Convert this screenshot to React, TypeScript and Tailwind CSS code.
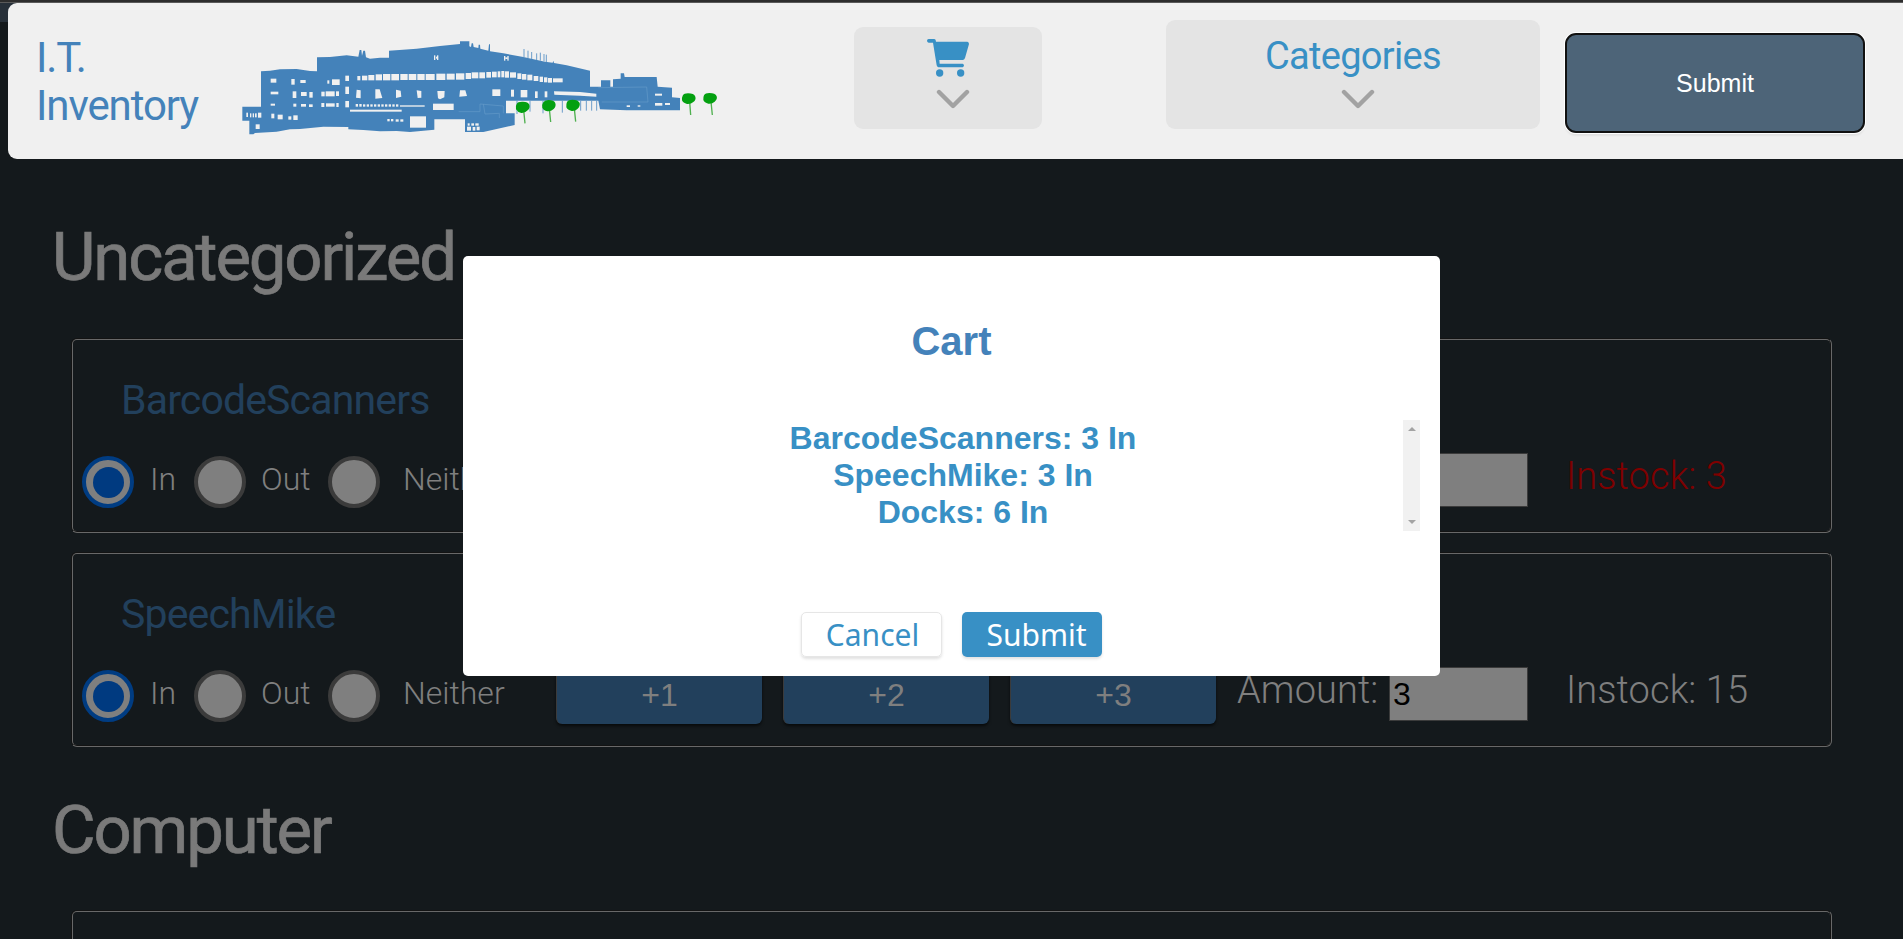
const HOLES: number[][] = [
  [122,146,17,12],[184,147,10,17],[211,150,16,9],[292,151,6,10],[306,148,23,17],[346,137,11,16],
  [122,185,23,8],[188,184,11,20],[213,186,17,12],[238,186,10,17],[274,185,10,14],[287,184,27,15],[318,184,9,14],[346,170,11,22],
  [122,221,13,6],[190,221,9,9],[213,222,15,8],[237,223,11,8],[274,219,9,12],[288,220,26,10],[319,219,7,12],[346,213,11,19],
  [49,248,5,13],[60,250,4,12],[68,250,4,12],[75,250,5,12],[84,248,10,15],[124,251,9,14],[143,254,15,14],[175,259,9,10],[190,256,13,14],[77,283,12,14],
  [382,138,9,13],[396,137,16,14],[415,135,18,16],[437,133,19,18],[459,132,22,19],[484,132,23,19],[511,132,22,18],[536,132,23,18],[562,132,22,18],[587,132,27,18],[619,131,27,19],[650,131,24,18],[678,130,25,19],[707,129,16,18],[725,127,20,18],[748,127,17,18],[769,126,14,17],[786,125,14,17],[803,124,8,18],[814,123,9,19],[825,124,12,19],[840,127,18,16],[862,130,12,17],[876,132,13,17],[892,134,15,17],[911,138,14,15],[929,140,10,16],[942,142,10,15],[954,144,12,14],[969,145,29,12],
  [787,178,24,20],[843,179,9,21],[872,180,20,22],[915,184,8,20],[944,184,8,18],
  [377,222,7,8],[388,222,7,8],[399,223,7,7],[410,223,7,7],[421,223,7,7],[432,223,7,7],[443,223,7,7],[454,223,7,7],[465,223,7,7],[476,223,7,7],[487,223,7,7],[498,223,7,7],[510,226,74,4],
  [360,239,155,6],[609,221,62,19],[472,267,7,7],[483,267,7,7],[497,268,9,7],[511,268,9,7],[540,259,48,34],
  [713,280,6,7],[724,280,8,7],[736,280,10,7],[711,290,12,12],[728,291,8,11],[740,290,9,11],
  [1275,191,21,6],[1275,219,22,8],[1305,219,15,6],[1190,226,10,5],[1223,226,8,4],[612,76,4,14],[618,80,4,6],[621,76,4,14],[822,78,4,14],[826,82,7,5],[832,78,4,14],
];

function Building() {
  return (
    <svg className="h-[115px] w-[500px]" viewBox="0 0 1500 345">
      <path fill="#4482ba" d="M37 230H93V124L120 122L150 118L200 117L240 123L261 124V82L300 81L350 76L385 80L389 60H394L396 77L400 62H405L408 82L420 86L450 83H477V62L560 56L630 48L690 42V34H718V49L723 51L725 40H729L731 51L745 54L746 44H750L751 56L775 62L777 43H780V64L820 70L880 81L945 95L968 98L970 92L972 99L1010 106L1080 122V170H1113V151H1141V170H1149V148L1172 146V130H1182L1184 141H1280L1283 170L1326 173V202L1350 204V241H1190L1110 238L1105 212H828V250H854V285L760 306H705V268H613V299L540 306L500 303L450 304L400 300L355 298V291L280 290L210 297L180 298L140 305L75 309L70 313H58V272H37Z" />
      <path stroke="#6b9dca" strokeWidth="3" fill="none" d="M882 82V57M894 84V62M905 87V66M920 90V70M931 92V68M942 94V72M949 96V74M861 210V252M900 210V245M939 210V250M997 210V248M1052 210V242M1069 210V242M1085 210V242M1100 210V242" />
      <g fill="#f0f0f0">
        {HOLES.map(([x, y, w, h], i) => <rect key={i} x={x} y={y} width={w} height={h} />)}
        <path d="M380 179L392 181V205L378 203ZM436 178H449L457 204L436 206ZM498 179L512 182L514 200L498 204ZM560 181L574 183V203L563 204ZM622 183H644L643 202L630 208L624 205ZM690 181H706L711 198L688 200ZM972 184L1050 186L1099 191V200L1050 197L973 194Z" />
      </g>
      <path fill="none" stroke="#639ac8" strokeWidth="2" d="M686 245H750V222L820 228V250M760 222L765 252L808 250V264M1105 173L1250 171L1254 216H1115" />
      <path fill="none" stroke="#4fb04f" strokeWidth="4" d="M881 240L885 280M958 236L962 276M1033 236L1037 275M1379 215L1382 255M1443 215L1447 255" />
      <g fill="#04a010">
        <path d="M860 222Q863 215 876 215Q894 214 898 224Q901 234 893 241Q885 250 874 249Q862 246 858 238Q856 228 860 222Z" />
        <path d="M939 218Q943 211 955 210Q973 210 976 220Q979 230 971 237Q963 245 952 244Q940 241 937 233Q935 224 939 218Z" />
        <path d="M1011 216Q1015 209 1027 209Q1045 209 1049 219Q1051 229 1043 236Q1036 244 1025 243Q1012 240 1009 232Q1008 222 1011 216Z" />
        <path d="M1358 197Q1362 190 1374 190Q1392 190 1396 200Q1399 209 1390 216Q1383 223 1371 222Q1359 219 1356 211Q1355 203 1358 197Z" />
        <path d="M1422 196Q1426 189 1438 189Q1456 189 1460 199Q1463 208 1454 215Q1447 222 1435 221Q1423 218 1420 210Q1419 202 1422 196Z" />
      </g>
    </svg>
  );
}

function Chevron() {
  return (
    <svg className="h-[20px] w-[34px] shrink-0" viewBox="0 0 34 20" fill="none" stroke="#a2a2a2" strokeWidth="4.4" strokeLinecap="round" strokeLinejoin="round">
      <path d="M3 3L17 17L31 3" />
    </svg>
  );
}

function CartIcon() {
  return (
    <svg className="h-[38px] w-[42px] shrink-0" viewBox="0 0 126 114" fill="#3890c5">
      <path d="M5 0H22Q27 1 27 8H121Q126 9 126 15L114 57Q112 63 107 63H37L38 74H107Q111 76 111 79Q111 84 107 85H34Q30 84 29 79L18 11H5Q0 10 0 5Q0 1 5 0Z" />
      <circle cx="38" cy="102" r="11" />
      <circle cx="101" cy="102" r="11" />
    </svg>
  );
}

function Radio({ on }: { on?: boolean }) {
  return on ? (
    <span className="-mt-[2px] flex size-[52px] shrink-0 items-center justify-center rounded-full border-4 border-[#003c82] bg-[#7f7f7f]">
      <span className="size-[31px] rounded-full bg-[#003a80]" />
    </span>
  ) : (
    <span className="-mt-[2px] size-[52px] shrink-0 rounded-full border-4 border-[#3b3b3b] bg-[#7f7f7f]" />
  );
}

const CARD = "mb-[19px] h-[195px] w-[1761px] rounded-[6px] border-2 border-[#686868] [border-style:groove] pt-[34px]";

function Item({ name, amount, stock, red }: { name: string; amount: string; stock: string; red?: boolean }) {
  return (
    <section className={CARD}>
      <h2 className="ml-[48px] h-[52px] text-[41px] leading-[52px] tracking-[-0.85px] text-[#22405c]">{name}</h2>
      <div className="mt-[27px] flex h-[60px] items-center pl-[9px] text-[32px] font-light leading-[60px] text-[#7f7f7f]">
        <Radio on />
        <span className="-mt-[8px] ml-[16px] w-[44px]">In</span>
        <Radio />
        <span className="-mt-[8px] ml-[15px] w-[67px]">Out</span>
        <Radio />
        <span className="-mt-[8px] ml-[23px] w-[153px]">Neither</span>
        <div className="-mt-[7px] flex gap-[21px]">
          {["+1", "+2", "+3"].map((t) => (
            <button key={t} className="h-[60px] w-[206px] rounded-[6px] border-l border-[#3b3b3b] bg-[#22405c] pt-[2px] font-['Liberation_Sans',sans-serif] text-[32px] leading-[58px] font-normal shadow-[0_2px_3px_rgba(0,0,0,0.6)]">{t}</button>
          ))}
        </div>
        <span className="-mt-[14px] ml-[21px] w-[152px] text-[38px] tracking-[0.1px]">Amount:</span>
        <span className="-mt-[7px] flex h-[54px] w-[139px] items-center border border-[#3b3b3b] bg-[#7f7f7f] pl-[3px] font-['Liberation_Sans',sans-serif] text-[32px] font-normal text-black">{amount}</span>
        <span className={red ? "-mt-[14px] ml-[38px] text-[38px] tracking-[0.1px] text-[#7f0000]" : "-mt-[14px] ml-[38px] text-[38px] tracking-[0.1px]"}>Instock: {stock}</span>
      </div>
    </section>
  );
}

export default function App() {
  return (
    <div className="relative h-[939px] w-[1903px] overflow-hidden bg-[#14191c] font-['Roboto',sans-serif] whitespace-nowrap">
      <div className="h-[3px] border-b border-[#5a5a5a] bg-[#2d2d2d]" />
      <div className="flex h-[156px]">
        <div className="h-[19px] w-[17px] bg-[#273039]" />
        <header className="-ml-[9px] flex h-[156px] flex-1 rounded-l-[9px] bg-[#f0f0f0]">
          <h1 className="mt-[31px] ml-[28px] w-[194px] text-[42px] leading-[48px] tracking-[-1.1px] text-[#4482ba]">I.T.<br />Inventory</h1>
          <div className="mt-[27px] w-[500px]"><Building /></div>
          <div className="mt-[24px] ml-[124px] flex h-[102px] w-[188px] flex-col items-center rounded-[9px] bg-[#e4e4e4] pt-[12px]">
            <div className="h-[38px]"><CartIcon /></div>
            <div className="mt-[12px] ml-[9px] flex"><Chevron /></div>
          </div>
          <div className="mt-[17px] ml-[124px] flex h-[109px] w-[374px] flex-col items-center rounded-[9px] bg-[#e4e4e4]">
            <div className="mt-[12px] h-[48px] text-[38px] leading-[48px] tracking-[-0.7px] text-[#3890c5]">Categories</div>
            <div className="mt-[9px] ml-[9px] flex"><Chevron /></div>
          </div>
          <button className="mt-[30px] ml-[25px] h-[100px] w-[300px] rounded-[11px] border-2 border-[#111] bg-[#4d6478] pt-[2px] font-['Liberation_Sans',sans-serif] text-[25px] text-white shadow-[0_0_0_1px_#fff,0_3px_2px_rgba(0,0,0,0.06)]">Submit</button>
        </header>
      </div>
      <main className="pl-[71px]">
        <h1 className="-ml-[19px] h-[179px] pt-[58px] text-[67px] leading-[80px] tracking-[-2.1px] text-[#7a7a7a] [-webkit-text-stroke:0.7px_#7a7a7a]">Uncategorized</h1>
        <Item name="BarcodeScanners" amount="3" stock="3" red />
        <Item name="SpeechMike" amount="3" stock="15" />
        <h1 className="-ml-[19px] h-[144px] pt-[24px] text-[67px] leading-[80px] tracking-[-2.1px] text-[#7a7a7a] [-webkit-text-stroke:0.7px_#7a7a7a]">Computer</h1>
        <section className={CARD} />
      </main>
      <div role="dialog" className="absolute top-[256px] left-[463px] flex h-[420px] w-[977px] flex-col items-center rounded-[5px] bg-white font-['Liberation_Sans',sans-serif] font-bold text-[#3890c5]">
        <h2 className="mt-[60px] h-[50px] text-[40px] leading-[50px] text-[#4482ba]">Cart</h2>
        <div className="mt-[54px] flex h-[111px] w-[937px]">
          <div className="flex-1 pl-[40px] text-center text-[32px] leading-[37px]">
            <p>BarcodeScanners: 3 In</p>
            <p>SpeechMike: 3 In</p>
            <p>Docks: 6 In</p>
          </div>
          <div className="flex w-[17px] flex-col items-center justify-between bg-[#f1f1f1] py-[7px]">
            <svg width="8" height="4"><path d="M0 4L4 0L8 4Z" fill="#a3a3a3" /></svg>
            <svg width="8" height="4"><path d="M0 0L4 4L8 0Z" fill="#a3a3a3" /></svg>
          </div>
        </div>
        <div className="mt-[81px] flex gap-[20px] font-['Noto_Sans',sans-serif] text-[30px] leading-[44px] font-normal">
          <button className="h-[45px] w-[141px] rounded-[5px] border border-[#e6e6e6] pt-[1px] pl-[2px] text-[30px] leading-[42px] shadow-[0_2px_3px_rgba(0,0,0,0.12)]">Cancel</button>
          <button className="h-[45px] w-[140px] rounded-[5px] bg-[#3890c5] pt-[1px] pl-[9px] text-white shadow-[0_2px_3px_rgba(0,0,0,0.12)]">Submit</button>
        </div>
      </div>
    </div>
  );
}
